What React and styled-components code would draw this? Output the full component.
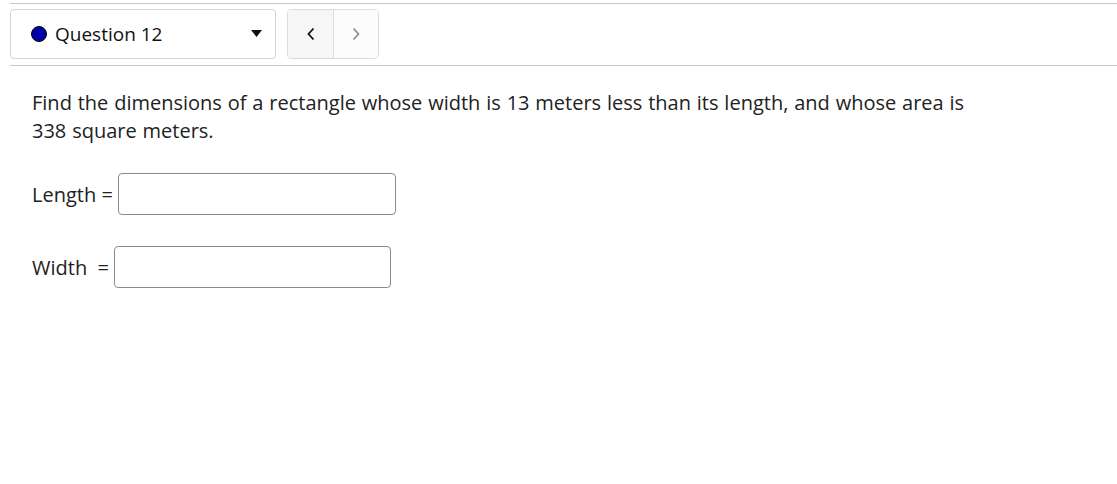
import React from "react";
import styled, { createGlobalStyle } from "styled-components";

const Global = createGlobalStyle`
  html, body { margin: 0; padding: 0; background: #fff; }
  body { font-family: "Open Sans", "Liberation Sans", sans-serif; color: #222; }
`;

const Page = styled.div`
  padding: 3px 0 0 10px;
`;

const Header = styled.div`
  border-top: 1px solid #c8c8c8;
  border-bottom: 1px solid #c8c8c8;
  padding: 5px 0 6px 0;
  display: flex;
  align-items: center;
  gap: 11px;
`;

const Select = styled.div`
  box-sizing: border-box;
  width: 266px;
  height: 50px;
  border: 1px solid #d3d3d3;
  border-radius: 4px;
  display: flex;
  align-items: center;
  padding: 0 13px 0 20px;
  font-size: 19px;
  color: #111;
`;

const Dot = styled.span`
  width: 16px;
  height: 16px;
  box-sizing: border-box;
  border-radius: 50%;
  background: #0000a8;
  border: 1.5px solid #000;
  margin-right: 8px;
  flex: none;
`;

const Label = styled.span`
  flex: 1;
`;

const Nav = styled.div`
  display: flex;
  height: 50px;
  box-sizing: border-box;
  border: 1px solid #dcdcdc;
  border-radius: 4px;
  overflow: hidden;
`;

const NavButton = styled.button`
  width: 45px;
  border: none;
  background: ${(p) => (p.$disabled ? "#fcfcfc" : "#f6f6f6")};
  display: flex;
  align-items: center;
  justify-content: center;
  padding: 0;
  & + & { border-left: 1px solid #dcdcdc; }
`;

const Body = styled.div`
  padding: 23px 0 0 22px;
  font-size: 20px;
  color: #222;
`;

const Question = styled.p`
  margin: 0;
  line-height: 28px;
  max-width: 950px;
  word-spacing: 0.65px;
`;

const Field = styled.div`
  display: flex;
  align-items: center;
  margin-top: ${(p) => p.$top}px;
`;

const FieldLabel = styled.span`
  white-space: pre;
  margin-right: 5px;
`;

const Input = styled.div`
  box-sizing: border-box;
  width: ${(p) => p.$w}px;
  height: 42px;
  border: 1px solid #8a8a8a;
  border-radius: 4px;
`;

export default function App() {
  return (
    <>
      <Global />
      <Page>
        <Header>
          <Select>
            <Dot />
            <Label>Question 12</Label>
            <svg width="11" height="8" viewBox="0 0 11 8"><path d="M0 0 H11 L5.5 7 Z" fill="#111" /></svg>
          </Select>
          <Nav>
            <NavButton>
              <svg width="10" height="14" viewBox="0 0 10 14"><path d="M7.5 1.5 L2.5 7 L7.5 12.5" stroke="#111" strokeWidth="1.8" fill="none" /></svg>
            </NavButton>
            <NavButton $disabled>
              <svg width="10" height="14" viewBox="0 0 10 14"><path d="M2.5 1.5 L7.5 7 L2.5 12.5" stroke="#888" strokeWidth="1.6" fill="none" /></svg>
            </NavButton>
          </Nav>
        </Header>
        <Body>
          <Question>
            Find the dimensions of a rectangle whose width is 13 meters less than its length, and whose area is 338 square meters.
          </Question>
          <Field $top={28}>
            <FieldLabel>Length =</FieldLabel>
            <Input $w={278} />
          </Field>
          <Field $top={31}>
            <FieldLabel>Width  =</FieldLabel>
            <Input $w={277} />
          </Field>
        </Body>
      </Page>
    </>
  );
}
